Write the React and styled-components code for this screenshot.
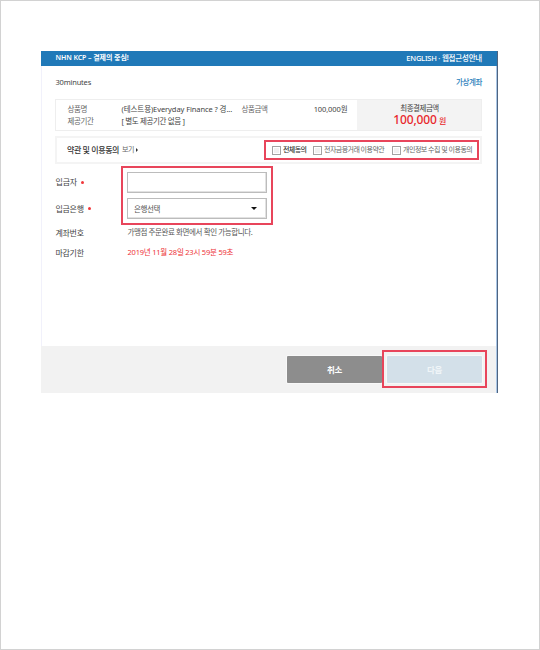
import React from "react";
import styled, { createGlobalStyle } from "styled-components";

const Global = createGlobalStyle`
  * { box-sizing: border-box; }
  body { margin: 0; background: #fff; }
  button, input { font: inherit; }
`;

const Page = styled.main`
  width: 540px;
  height: 650px;
  border: 1px solid #d2d2d2;
  padding: 50px 0 0 40px;
  background: #fff;
  font-family: "Noto Sans", "Noto Sans CJK KR", sans-serif;
  overflow: hidden;
`;

const Window = styled.section`
  width: 457px;
  height: 342px;
  display: flex;
  flex-direction: column;
  border-left: 1px solid #f1f1fb;
  background: linear-gradient(#a9c6e6, #a9c6e6) right 1px top 0 / 1px 100% no-repeat,
    linear-gradient(#4f6480, #4f6480) right / 1px 100% no-repeat, #fff;
`;

const TopBar = styled.header`
  height: 15px;
  flex: none;
  margin-left: -1px;
  margin-right: 1px;
  padding: 0 15px 1px 14.5px;
  display: flex;
  align-items: center;
  justify-content: space-between;
  background: #2079b8;
`;

const Text = styled.span`
  display: block;
  white-space: nowrap;
  line-height: 12px;
  font-size: ${(p) => p.$size || 7.5}px;
  font-weight: ${(p) => p.$weight || 400};
  color: ${(p) => p.$color || "#444"};
  letter-spacing: ${(p) => p.$track ?? -0.4}px;
`;

const Content = styled.div`
  flex: 1;
  padding: 0 16px 0 13px;
`;

const MethodRow = styled.div`
  height: 33px;
  padding-bottom: 1px;
  padding-left: 0.5px;
  display: flex;
  align-items: center;
  justify-content: space-between;
`;

const Summary = styled.div`
  display: flex;
  height: 32px;
  border: 1px solid #eee;
`;

const Product = styled.div`
  flex: 1;
  display: grid;
  grid-template-columns: 54px 120px 1fr auto;
  grid-auto-rows: 12px;
  padding: 3px 9.5px 0 11.5px;
`;

const Total = styled.div`
  width: 124px;
  display: flex;
  flex-direction: column;
  align-items: center;
  background: #f3f3f3;
  padding-top: 3px;
`;

const Caption = styled(Text)`
  line-height: 11px;
  padding-left: 1px;
`;

const Amount = styled.div`
  display: flex;
  align-items: baseline;
  gap: 2px;
  padding-left: 1px;
`;

const Terms = styled.div`
  height: 28px;
  margin-top: 5px;
  border: 2px solid #f4f4f4;
  display: flex;
  align-items: center;
  padding-left: 10px;
`;

const TermsTitle = styled(Text)`
  margin-top: -1px;
`;

const Arrow = styled.i`
  border: 2px solid transparent;
  border-left: 2.5px solid #333;
  border-right: 0;
  margin-left: 2px;
`;

const More = styled(Text)`
  margin-left: 3px;
`;

const Agreements = styled.div`
  width: 215px;
  height: 20px;
  margin-left: auto;
  margin-right: 1px;
  border: 2px solid #e8455b;
  display: flex;
  align-items: center;
  padding-left: 6px;
`;

const Check = styled.label`
  display: flex;
  align-items: center;
  gap: 2px;
  width: ${(p) => p.$width}px;
  flex: none;
`;

const Box = styled.span`
  width: 9px;
  height: 9px;
  flex: none;
  border: 1px solid #a3a3a3;
  background: #f1f1f1;
  box-shadow: inset 0 0 0 1px #fff;
`;

const Form = styled.div`
  position: relative;
  display: grid;
  grid-template-columns: 72px 1fr;
  grid-template-rows: 26px 27px 22px 18px;
  align-items: center;
  margin-top: 5px;
`;

const Label = styled.div`
  display: flex;
  align-items: center;
  gap: 4px;
  padding-left: 0.5px;
`;

const Value = styled(Text)`
  margin-top: -1.5px;
  padding-left: 0.5px;
`;

const Required = styled.i`
  width: 3px;
  height: 3px;
  border-radius: 50%;
  background: #f0373b;
`;

const Field = styled.div`
  width: 140px;
  height: 21px;
  border: 1px solid #bcbcbc;
  box-shadow: inset -1px -1px #e2e2e2;
  background: #fff;
  display: flex;
  align-items: center;
  justify-content: space-between;
  padding: 0 9px 0 6px;
`;

const Caret = styled.i`
  border: 3px solid transparent;
  border-top: 3px solid #111;
  border-bottom: 0;
`;

const FieldMarker = styled.div`
  position: absolute;
  left: 66px;
  top: -3px;
  width: 152px;
  height: 59px;
  border: 2px solid #e8455b;
`;

const Footer = styled.footer`
  height: 47px;
  flex: none;
  margin-left: -1px;
  margin-right: 2px;
  padding: 10px 14px 0 0;
  display: flex;
  justify-content: flex-end;
  gap: 5px;
  background: #f2f2f2;
`;

const Button = styled.button`
  position: relative;
  width: 95px;
  height: 27px;
  border: 0;
  border-radius: 1px;
  padding: 0;
  display: flex;
  align-items: center;
  justify-content: center;
  background: ${(p) => (p.$next ? "#d3e0e9" : "#8d8d8d")};
  box-shadow: 0 0 0 1px #f8f8f8;
`;

const ButtonMarker = styled.i`
  position: absolute;
  inset: -6px -5px -5px -5px;
  border: 2px solid #e8455b;
`;

export default function App() {
  return (
    <Page>
      <Global />
      <Window>
        <TopBar>
          <Text $size={7} $weight={600} $color="#fff" $track={-0.08}>NHN KCP – 결제의 중심!</Text>
          <Text $size={7.5} $weight={500} $color="#fff" $track={-0.22}>ENGLISH · 웹접근성안내</Text>
        </TopBar>
        <Content>
          <MethodRow>
            <Text $track={-0.2}>30minutes</Text>
            <Text $weight={500} $color="#2a80bb">가상계좌</Text>
          </MethodRow>
          <Summary>
            <Product>
              <Text $color="#666">상품명</Text>
              <Text $track={-0.08}>(테스트용)Everyday Finance ? 경...</Text>
              <Text $color="#666">상품금액</Text>
              <Text $track={-0.1}>100,000원</Text>
              <Text $color="#666">제공기간</Text>
              <Text $track={-0.35}>[ 별도 제공기간 없음 ]</Text>
            </Product>
            <Total>
              <Caption $track={-0.5}>최종결제금액</Caption>
              <Amount>
                <Text $size={12} $weight={500} $color="#e8262b" $track={-0.1}>100,000</Text>
                <Text $size={8} $weight={500} $color="#e8262b">원</Text>
              </Amount>
            </Total>
          </Summary>
          <Terms>
            <TermsTitle $size={8} $weight={500} $color="#333" $track={-0.4}>약관 및 이용동의</TermsTitle>
            <More $size={7} $color="#666" $track={-0.6}>보기</More>
            <Arrow />
            <Agreements>
              <Check $width={41}><Box /><Text $size={7} $weight={500} $color="#333" $track={-0.6}>전체동의</Text></Check>
              <Check $width={79}><Box /><Text $size={7} $color="#666" $track={-0.55}>전자금융거래 이용약관</Text></Check>
              <Check $width={84}><Box /><Text $size={7} $color="#666" $track={-0.5}>개인정보 수집 및 이용동의</Text></Check>
            </Agreements>
          </Terms>
          <Form>
            <Label><Text $size={8} $track={-0.2}>입금자</Text><Required /></Label>
            <Field />
            <Label><Text $size={8} $track={-0.3}>입금은행</Text><Required /></Label>
            <Field><Text $color="#555">은행선택</Text><Caret /></Field>
            <Label><Text $size={8} $track={-0.3}>계좌번호</Text></Label>
            <Value $color="#555">가맹점 주문완료 화면에서 확인 가능합니다.</Value>
            <Label><Text $size={8} $track={-0.3}>마감기한</Text></Label>
            <Value $color="#ee3338" $track={-0.22}>2019년 11월 28일 23시 59분 59초</Value>
            <FieldMarker />
          </Form>
        </Content>
        <Footer>
          <Button type="button"><Text $size={8.5} $weight={700} $color="#fff">취소</Text></Button>
          <Button type="button" $next><Text $size={8.5} $weight={700} $color="#f0f5f8">다음</Text><ButtonMarker /></Button>
        </Footer>
      </Window>
    </Page>
  );
}
